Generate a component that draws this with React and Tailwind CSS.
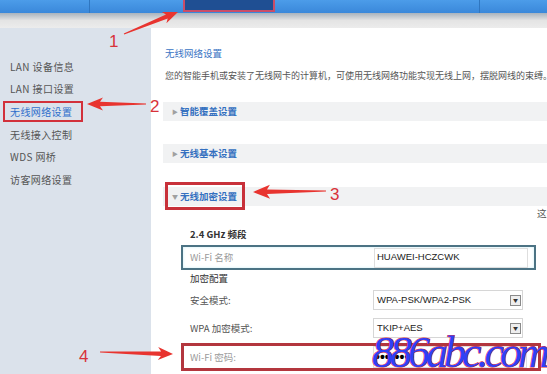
import React from "react";

function arrowPoints(tx, ty, hx, hy, headLen = 16, headW = 13, shaftW = 4.5, tailW = 1) {
  const dx = hx - tx, dy = hy - ty;
  const L = Math.hypot(dx, dy);
  const ux = dx / L, uy = dy / L;
  const px = -uy, py = ux;
  const bx = hx - ux * headLen, by = hy - uy * headLen;
  const p = (x, y) => `${x.toFixed(1)},${y.toFixed(1)}`;
  return [
    p(tx + px * tailW / 2, ty + py * tailW / 2),
    p(bx + px * shaftW / 2 + ux * 3, by + py * shaftW / 2 + uy * 3),
    p(bx + px * headW / 2, by + py * headW / 2),
    p(hx, hy),
    p(bx - px * headW / 2, by - py * headW / 2),
    p(bx - px * shaftW / 2 + ux * 3, by - py * shaftW / 2 + uy * 3),
    p(tx - px * tailW / 2, ty - py * tailW / 2),
  ].join(" ");
}

const cjk = { fontFamily: '"Noto Sans CJK SC", "Liberation Sans", sans-serif' };

function Bar({ label, open }) {
  return (
    <div className="h-[19px] bg-[#f1f2f3] flex items-center pl-[9px]">
      <span className="text-[#a0a0a0] text-[6px] w-[8px]">{open ? "▼" : "▶"}</span>
      <span className="text-[#3470c0] text-[9.5px] font-bold leading-none" style={cjk}>{label}</span>
    </div>
  );
}

function Select({ value }) {
  return (
    <div className="w-[150px] h-[20px] border border-[#d6d6d6] bg-white flex items-center pl-[3px] pr-[1px]">
      <span className="flex-1 text-[9.5px] text-[#222]" style={{ fontFamily: '"Liberation Sans", sans-serif' }}>{value}</span>
      <span className="w-[11px] h-[11px] border border-[#8a8a8a] bg-[#eeeeee] flex items-center justify-center text-[5px] text-[#333]">▼</span>
    </div>
  );
}

export default function App() {
  const side = ["LAN 设备信息", "LAN 接口设置", "无线网络设置", "无线接入控制", "WDS 网桥", "访客网络设置"];
  return (
    <div className="relative w-[547px] h-[374px] overflow-hidden bg-white" style={cjk}>
      {/* top nav */}
      <div className="relative h-[13px] bg-gradient-to-b from-[#4c9ce9] to-[#3a88da] flex">
        <div className="w-[90px] h-full border-r border-[#2f76c0]" />
        <div className="w-[93px] h-full" />
        <div className="w-[92px] h-[14px] -mt-[2px] bg-[#1f4f93] border-2 border-[#c94d68]" />
        <div className="w-[205px] h-full border-r border-[#2f76c0]" />
        <div className="flex-1" />
      </div>
      <div className="h-[15px] bg-gradient-to-b from-[#a9b3bd] via-[#e4e4e4] to-[#ececec]" />

      <div className="flex h-[346px]">
        {/* sidebar */}
        <div className="w-[151px] bg-[#dbe2eb] pt-[27px]">
          {side.map((s, i) => (
            <div key={s} className="relative h-[22.6px] flex items-center pl-[10px]">
              <span className={`text-[10px] tracking-[0.4px] ${i === 2 ? "text-[#2f6fcb]" : "text-[#555]"}`}>{s}</span>
              {i === 2 && (
                <div className="absolute left-[3px] top-[1px] w-[80px] h-[21px] border-2 border-[#d2313b]" />
              )}
            </div>
          ))}
        </div>

        {/* content */}
        <div className="flex-1 overflow-hidden pl-[12px]">
          <div className="mt-[18px] h-[14px] leading-[14px] pl-[2px] text-[9.5px] text-[#3a74c4]">无线网络设置</div>
          <div className="mt-[9px] h-[14px] leading-[14px] pl-[2px] text-[9px] text-[#555] whitespace-nowrap">
            您的智能手机或安装了无线网卡的计算机，可使用无线网络功能实现无线上网，摆脱网线的束缚。
          </div>
          <div className="mt-[19px]"><Bar label="智能覆盖设置" /></div>
          <div className="mt-[23px]"><Bar label="无线基本设置" /></div>
          <div className="relative mt-[24px]">
            <Bar label="无线加密设置" open />
            <div className="absolute left-[2px] -top-[5px] w-[80px] h-[28px] border-[3px] border-[#c8313a]" />
          </div>
          <div className="h-[14px] leading-[14px] pl-[374px] text-[9.5px] text-[#555] whitespace-nowrap">这是</div>

          <div className="ml-[18px] w-[370px]">
            <div className="mt-[7px] h-[14px] leading-[14px] pl-[9px] text-[9.5px] font-bold text-[#333]">2.4 GHz 频段</div>
            <div className="mt-[4px] w-[355px] h-[25px] border-2 border-[#4c7384] shadow-[inset_0_0_3px_#c9eef5] flex items-center pl-[7px]">
              <span className="w-[184px] text-[9.5px] text-[#9a9a9a]">Wi-Fi 名称</span>
              <div className="w-[154px] h-[20px] border border-[#dedede] flex items-center pl-[2px] text-[9.5px] text-[#1a1a1a]" style={{ fontFamily: '"Liberation Sans", sans-serif' }}>HUAWEI-HCZCWK</div>
            </div>
            <div className="mt-[1px] h-[14px] leading-[14px] pl-[9px] text-[9.5px] text-[#333]">加密配置</div>
            <div className="mt-[5px] h-[20px] flex items-center pl-[9px]">
              <span className="w-[183px] text-[9.5px] text-[#555]">安全模式:</span>
              <Select value="WPA-PSK/WPA2-PSK" />
            </div>
            <div className="mt-[8px] h-[20px] flex items-center pl-[9px]">
              <span className="w-[183px] text-[9.5px] text-[#555]">WPA 加密模式:</span>
              <Select value="TKIP+AES" />
            </div>
            <div className="mt-[5px] w-[360px] h-[28px] border-[3px] border-[#b3363e] flex items-center pl-[6px]">
              <span className="w-[183px] text-[9.5px] text-[#9a9a9a]">Wi-Fi 密码:</span>
              <div className="w-[154px] h-[22px] border border-[#dedede] flex items-center pl-[1px] text-[14px] font-bold leading-none text-black" style={{ fontFamily: '"Liberation Sans", sans-serif' }}>••••••••</div>
            </div>
          </div>
        </div>
      </div>

      {/* annotations */}
      <svg className="absolute inset-0 pointer-events-none" width="547" height="374">
        <polygon points={arrowPoints(124, 34, 178, 12, 15, 12)} fill="#e8342f" />
        <polygon points={arrowPoints(146, 104, 87, 104, 16, 13)} fill="#e8342f" />
        <polygon points={arrowPoints(326, 191, 253, 192, 17, 14)} fill="#e8342f" />
        <polygon points={arrowPoints(100, 352, 173, 354, 15, 13)} fill="#e8342f" />
        <g fill="#d8323a" fontFamily="Liberation Sans, sans-serif" fontSize="17">
          <text x="109" y="47">1</text>
          <text x="150" y="112">2</text>
          <text x="330" y="200">3</text>
          <text x="79" y="362">4</text>
        </g>
      </svg>
      <span
        className="absolute left-[372px] top-[331px] text-[44px] italic tracking-[-4px] text-[#3040f5] leading-none whitespace-nowrap [-webkit-text-stroke:1px_#e63030] [paint-order:stroke_fill]"
        style={{ fontFamily: '"Liberation Serif", serif' }}
      >
        886abc.com
      </span>
    </div>
  );
}
